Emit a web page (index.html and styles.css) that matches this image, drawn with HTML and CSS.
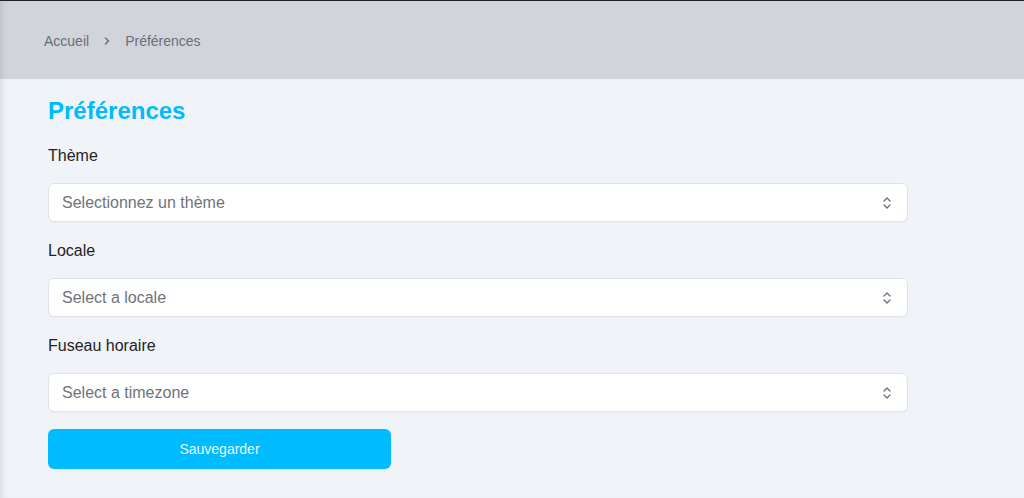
FILE: index.html
```html
<!DOCTYPE html>
<html lang="fr">
<head>
<meta charset="utf-8">
<title>Préférences</title>
<link rel="stylesheet" href="styles.css">
</head>
<body>
<div class="app">
  <header class="topbar">
    <nav class="crumbs">
      <span class="crumb">Accueil</span>
      <svg class="sep" width="8" height="10" viewBox="0 0 8 10"><path d="M2.5 2 L5.5 5 L2.5 8" fill="none" stroke="#6b7280" stroke-width="1.5" stroke-linecap="round" stroke-linejoin="round"/></svg>
      <span class="crumb">Préférences</span>
    </nav>
  </header>
  <main class="content">
    <h1 class="title">Préférences</h1>
    <form class="form">
      <div class="field">
        <label class="label">Thème</label>
        <div class="select"><span class="placeholder">Selectionnez un thème</span>
          <svg class="chev" width="12" height="14" viewBox="0 0 12 14"><path d="M3 5 L6 2 L9 5 M3 9 L6 12 L9 9" fill="none" stroke="#6b7280" stroke-width="1.4" stroke-linecap="round" stroke-linejoin="round"/></svg>
        </div>
      </div>
      <div class="field">
        <label class="label">Locale</label>
        <div class="select"><span class="placeholder">Select a locale</span>
          <svg class="chev" width="12" height="14" viewBox="0 0 12 14"><path d="M3 5 L6 2 L9 5 M3 9 L6 12 L9 9" fill="none" stroke="#6b7280" stroke-width="1.4" stroke-linecap="round" stroke-linejoin="round"/></svg>
        </div>
      </div>
      <div class="field">
        <label class="label">Fuseau horaire</label>
        <div class="select"><span class="placeholder">Select a timezone</span>
          <svg class="chev" width="12" height="14" viewBox="0 0 12 14"><path d="M3 5 L6 2 L9 5 M3 9 L6 12 L9 9" fill="none" stroke="#6b7280" stroke-width="1.4" stroke-linecap="round" stroke-linejoin="round"/></svg>
        </div>
      </div>
      <button type="button" class="btn">Sauvegarder</button>
    </form>
  </main>
</div>
</body>
</html>
```

FILE: styles.css
```css
html, body {
  margin: 0;
  padding: 0;
}
body {
  font-family: "Liberation Sans", Arial, sans-serif;
  background: #f0f3f8;
  height: 498px;
  overflow: hidden;
}
.app {
  border-top: 1px solid #1f2226;
  height: 497px;
  box-shadow: inset 6px 0 6px -4px rgba(0,0,0,0.10);
  display: flex;
  flex-direction: column;
}
.topbar {
  height: 78px;
  background: #d1d5db;
  display: flex;
  align-items: center;
  padding-left: 44px;
  box-shadow: inset 6px 0 6px -4px rgba(0,0,0,0.10);
}
.crumbs {
  display: flex;
  align-items: center;
  gap: 14px;
  font-size: 14px;
  color: #6b6f76;
  margin-top: 2px;
}
.sep {
  display: block;
}
.content {
  padding: 16px 48px 0 48px;
}
.title {
  margin: 0;
  font-size: 24px;
  line-height: 32px;
  font-weight: 700;
  color: #00bbff;
}
.form {
  width: 860px;
  display: flex;
  flex-direction: column;
  gap: 17px;
  margin-top: 17px;
}
.field {
  display: flex;
  flex-direction: column;
  gap: 15px;
}
.label {
  font-size: 16px;
  line-height: 24px;
  color: #1f2226;
}
.select {
  box-sizing: border-box;
  height: 39px;
  background: #ffffff;
  border: 1px solid #dfe3e8;
  border-radius: 6px;
  display: flex;
  align-items: center;
  justify-content: space-between;
  padding: 1px 14px 0 13px;
  box-shadow: 0 1px 1px rgba(0,0,0,0.03);
}
.placeholder {
  font-size: 16px;
  color: #6f737a;
}
.chev {
  display: block;
}
.btn {
  width: 343px;
  height: 40px;
  background: #00bbff;
  color: #e8f7ff;
  border: none;
  border-radius: 6px;
  font-family: "Liberation Sans", Arial, sans-serif;
  font-size: 14px;
  padding: 0;
}
```
